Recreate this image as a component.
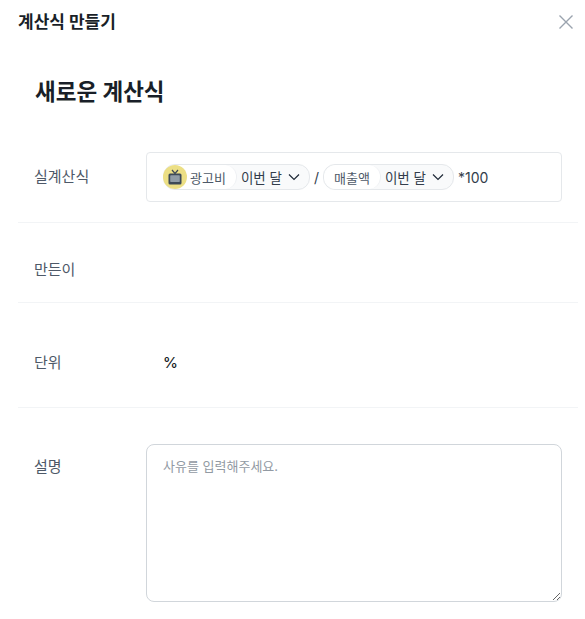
<div class="modal">
	<header class="top">
		<h1>계산식 만들기</h1>
		<button class="close" aria-label="닫기">
			<svg width="16" height="16" viewBox="0 0 16 16" fill="none" stroke="#9aa3ae" stroke-width="1.4">
				<path d="M1.5 1.5 14.5 14.5M14.5 1.5 1.5 14.5" />
			</svg>
		</button>
	</header>

	<h2>새로운 계산식</h2>

	<section class="row formula-row">
		<div class="label">실계산식</div>
		<div class="formula">
			<span class="chip">
				<span class="name has-icon">
					<span class="avatar">
						<svg width="16" height="17" viewBox="0 0 16 17" fill="none">
							<path d="M5 1 8 4.5 11 1" stroke="#3d4a57" stroke-width="1.2" />
							<rect x="1.5" y="4.5" width="13" height="11" rx="1.5" fill="#3d4a57" />
							<rect x="3.2" y="6.3" width="9.6" height="6.6" rx="0.6" fill="#8f9ca6" />
						</svg>
					</span>
					광고비
				</span>
				<span class="period">이번 달
					<svg width="12" height="8" viewBox="0 0 12 8" fill="none" stroke="#1f2937" stroke-width="1.2">
						<path d="M1 1.5 6 6.5 11 1.5" />
					</svg>
				</span>
			</span>
			<span class="op">/</span>
			<span class="chip">
				<span class="name">매출액</span>
				<span class="period">이번 달
					<svg width="12" height="8" viewBox="0 0 12 8" fill="none" stroke="#1f2937" stroke-width="1.2">
						<path d="M1 1.5 6 6.5 11 1.5" />
					</svg>
				</span>
			</span>
			<span class="op">*100</span>
		</div>
	</section>

	<section class="row maker-row">
		<div class="label">만든이</div>
	</section>

	<section class="row unit-row">
		<div class="label">단위</div>
		<div class="unit">%</div>
	</section>

	<section class="desc-row">
		<div class="label desc-label">설명</div>
		<textarea placeholder="사유를 입력해주세요."></textarea>
	</section>
</div>

<style>
	:global(body) {
		background: #fff;
		font-family: Inter, "Noto Sans CJK KR", sans-serif;
		color: #191f28;
	}

	.modal {
		width: 585px;
		height: 619px;
		overflow: hidden;
		box-sizing: border-box;
		padding: 0 7px 0 18px;
	}

	.top {
		display: flex;
		justify-content: space-between;
		align-items: center;
		height: 44px;
	}

	h1 {
		margin: 0;
		font-size: 17px;
		font-weight: 700;
		line-height: 44px;
		color: #191f28;
	}

	.close {
		border: 0;
		background: none;
		padding: 0;
		width: 16px;
		height: 16px;
		margin-right: 4px;
		display: flex;
	}

	h2 {
		margin: 32px 0 0 17px;
		font-size: 22.5px;
		line-height: 32px;
		font-weight: 700;
		color: #191f28;
	}

	.row {
		display: flex;
		border-bottom: 1px solid #f2f4f6;
		padding-left: 16px;
	}

	.label {
		width: 112px;
		flex-shrink: 0;
		font-size: 15px;
		line-height: 22px;
		color: #4e5968;
	}

	.formula-row {
		margin-top: 44px;
		height: 70px;
	}

	.formula-row .label {
		margin-top: 14px;
	}

	.formula {
		width: 416px;
		height: 50px;
		box-sizing: border-box;
		border: 1px solid #e5e8eb;
		border-radius: 4px;
		padding-left: 16px;
		display: flex;
		align-items: center;
		gap: 4px;
		font-size: 14px;
	}

	.chip {
		display: flex;
		align-items: center;
		height: 24px;
		border: 1px solid #e5e8eb;
		border-radius: 12px;
		background: #f9fafb;
		color: #333d4b;
	}

	.name {
		display: flex;
		align-items: center;
		height: 24px;
		padding: 0 10px;
		background: #fff;
		border-radius: 12px;
		border-right: 1px solid #eef0f3;
		font-size: 13px;
		color: #4e5968;
	}

	.name.has-icon {
		padding-left: 0;
		gap: 3px;
	}

	.avatar {
		width: 24px;
		height: 24px;
		border-radius: 50%;
		background: #ecdf85;
		display: flex;
		align-items: center;
		justify-content: center;
		margin-left: -1px;
	}

	.period {
		display: flex;
		align-items: center;
		gap: 6px;
		padding: 0 9px 0 4px;
		font-size: 13.5px;
	}

	.op {
		color: #333d4b;
	}

	.maker-row {
		height: 65px;
		padding-top: 14px;
		align-items: center;
	}

	.unit-row {
		height: 88px;
		padding-top: 16px;
		align-items: center;
	}

	.unit {
		font-size: 15px;
		font-weight: 500;
		margin: 0 0 2px 17px;
	}

	.desc-row {
		display: flex;
		padding: 36px 0 0 16px;
	}

	.desc-label {
		margin-top: 12px;
	}

	textarea {
		width: 416px;
		height: 158px;
		box-sizing: border-box;
		border: 1px solid #d1d6db;
		border-radius: 8px;
		padding: 11px 16px;
		font: inherit;
		font-size: 13px;
		outline: none;
	}

	textarea::placeholder {
		color: #929aa3;
	}
</style>
